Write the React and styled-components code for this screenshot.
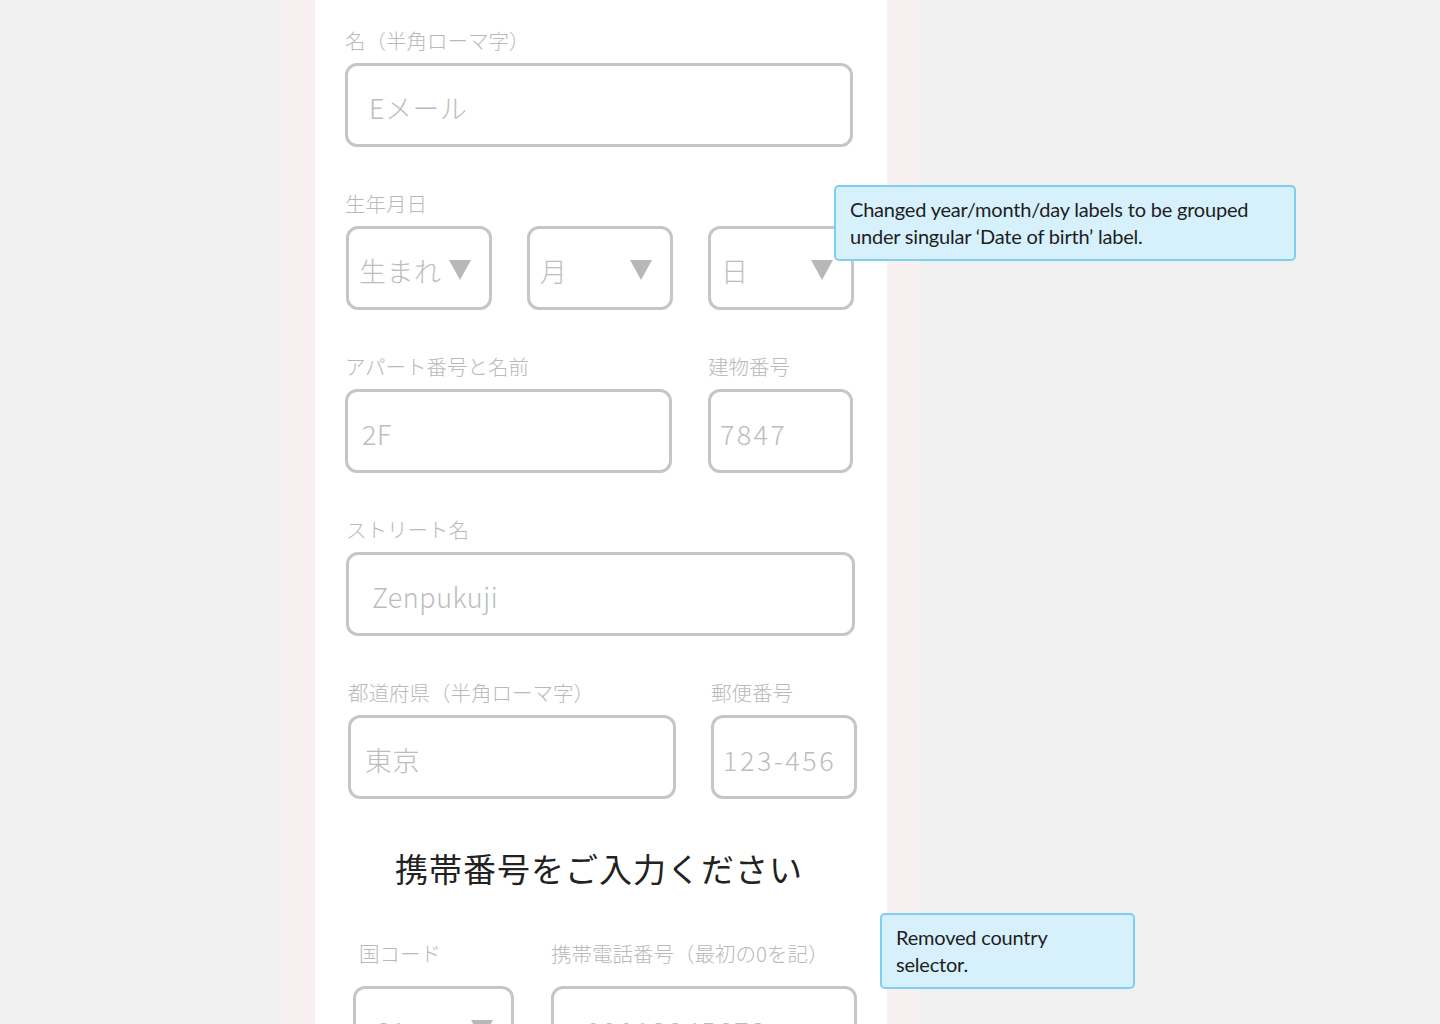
import React from "react";
import styled, { createGlobalStyle } from "styled-components";

const GlobalStyle = createGlobalStyle`
  html, body {
    margin: 0;
    padding: 0;
    background: #f0f0f0;
    overflow: hidden;
  }
  #root {
    height: 1024px;
  }
`;

const Page = styled.div`
  position: relative;
  width: 1440px;
  height: 1024px;
  background: #f0f0f0;
  overflow: hidden;
`;

const PinkColumn = styled.div`
  margin-left: 280px;
  width: 640px;
  height: 100%;
  background: #f7eff0;
  padding: 0 33px 0 35px;
  box-sizing: border-box;
`;

const Panel = styled.div`
  background: #ffffff;
  height: 100%;
  padding: 28px 34px 0 30px;
  box-sizing: border-box;
  font-family: "Noto Sans CJK JP", "Noto Sans", sans-serif;
`;

const Group = styled.div`
  display: flex;
  gap: ${(p) => p.gap || 36}px;
  margin-left: ${(p) => p.shift || 0}px;
  margin-bottom: 44px;
`;

const Field = styled.div`
  display: flex;
  flex-direction: column;
  width: ${(p) => (p.width ? `${p.width}px` : "auto")};
  flex: ${(p) => (p.width ? "none" : 1)};
`;

const Label = styled.div`
  height: 24px;
  line-height: 24px;
  font-size: 20.5px;
  font-weight: 300;
  color: #b9b9b9;
  margin-bottom: ${(p) => p.space || 11}px;
  padding-left: ${(p) => p.indent || 0}px;
  white-space: nowrap;
`;

const Box = styled.div`
  height: 84px;
  box-sizing: border-box;
  border: 3px solid #c6c6c6;
  border-radius: 12px;
  display: flex;
  align-items: center;
  justify-content: space-between;
  padding: 4px 18px 0 ${(p) => p.pad || 14}px;
  font-size: 27px;
  font-weight: 300;
  color: #bdbdbd;
  letter-spacing: ${(p) => p.track || 0.5}px;
  white-space: nowrap;
  overflow: hidden;
`;

const Arrow = styled.span`
  width: 0;
  height: 0;
  border-left: 11px solid transparent;
  border-right: 11px solid transparent;
  border-top: 20px solid #b8b8b8;
`;

const Heading = styled.h2`
  margin: 0 0 53px;
  padding-top: 5px;
  text-align: center;
  font-size: 33px;
  font-weight: 400;
  color: #222;
  letter-spacing: 1px;
  line-height: 40px;
`;

const Note = styled.div`
  position: absolute;
  left: ${(p) => p.x}px;
  top: ${(p) => p.y}px;
  width: ${(p) => p.w}px;
  height: 76px;
  box-sizing: border-box;
  padding: 9px 14px;
  background: #d6f0fc;
  border: 2px solid #80cdf2;
  border-radius: 5px;
  font-family: Lato, "Liberation Sans", sans-serif;
  font-size: 20px;
  line-height: 27px;
  color: #1e1e1e;
  letter-spacing: -0.2px;
`;

function Select({ text, width }) {
  return (
    <Field width={width}>
      <Box pad={10}>
        <span>{text}</span>
        <Arrow />
      </Box>
    </Field>
  );
}

export default function App() {
  return (
    <Page>
      <GlobalStyle />
      <PinkColumn>
        <Panel>
          <Group>
            <Field>
              <Label>名（半角ローマ字）</Label>
              <Box pad={21}>Eメール</Box>
            </Field>
          </Group>

          <Field>
            <Label>生年月日</Label>
          </Field>
          <Group gap={35} shift={1}>
            <Select text="生まれ" width={146} />
            <Select text="月" width={146} />
            <Select text="日" width={146} />
          </Group>

          <Group>
            <Field>
              <Label>アパート番号と名前</Label>
              <Box pad={14}>2F</Box>
            </Field>
            <Field width={145}>
              <Label>建物番号</Label>
              <Box pad={9} track={2.3}>
                7847
              </Box>
            </Field>
          </Group>

          <Group shift={1}>
            <Field style={{ marginRight: -2 }}>
              <Label>ストリート名</Label>
              <Box pad={23}>Zenpukuji</Box>
            </Field>
          </Group>

          <Group shift={3} gap={35}>
            <Field>
              <Label>都道府県（半角ローマ字）</Label>
              <Box pad={14}>東京</Box>
            </Field>
            <Field width={146} style={{ marginRight: -4 }}>
              <Label>郵便番号</Label>
              <Box pad={9} track={2.5}>
                123-456
              </Box>
            </Field>
          </Group>

          <Heading>携帯番号をご入力ください</Heading>

          <Group shift={8} gap={37}>
            <Field width={161}>
              <Label space={21} indent={6}>
                国コード
              </Label>
              <Box pad={20}>
                <span>81</span>
                <Arrow />
              </Box>
            </Field>
            <Field style={{ marginRight: -4 }}>
              <Label space={21}>携帯電話番号（最初の0を記）</Label>
              <Box pad={32} track={2}>
                09012345678
              </Box>
            </Field>
          </Group>
        </Panel>
      </PinkColumn>

      <Note x={834} y={185} w={462}>
        Changed year/month/day labels to be grouped under singular ‘Date of
        birth’ label.
      </Note>
      <Note x={880} y={913} w={255}>
        Removed country
        <br />
        selector.
      </Note>
    </Page>
  );
}
